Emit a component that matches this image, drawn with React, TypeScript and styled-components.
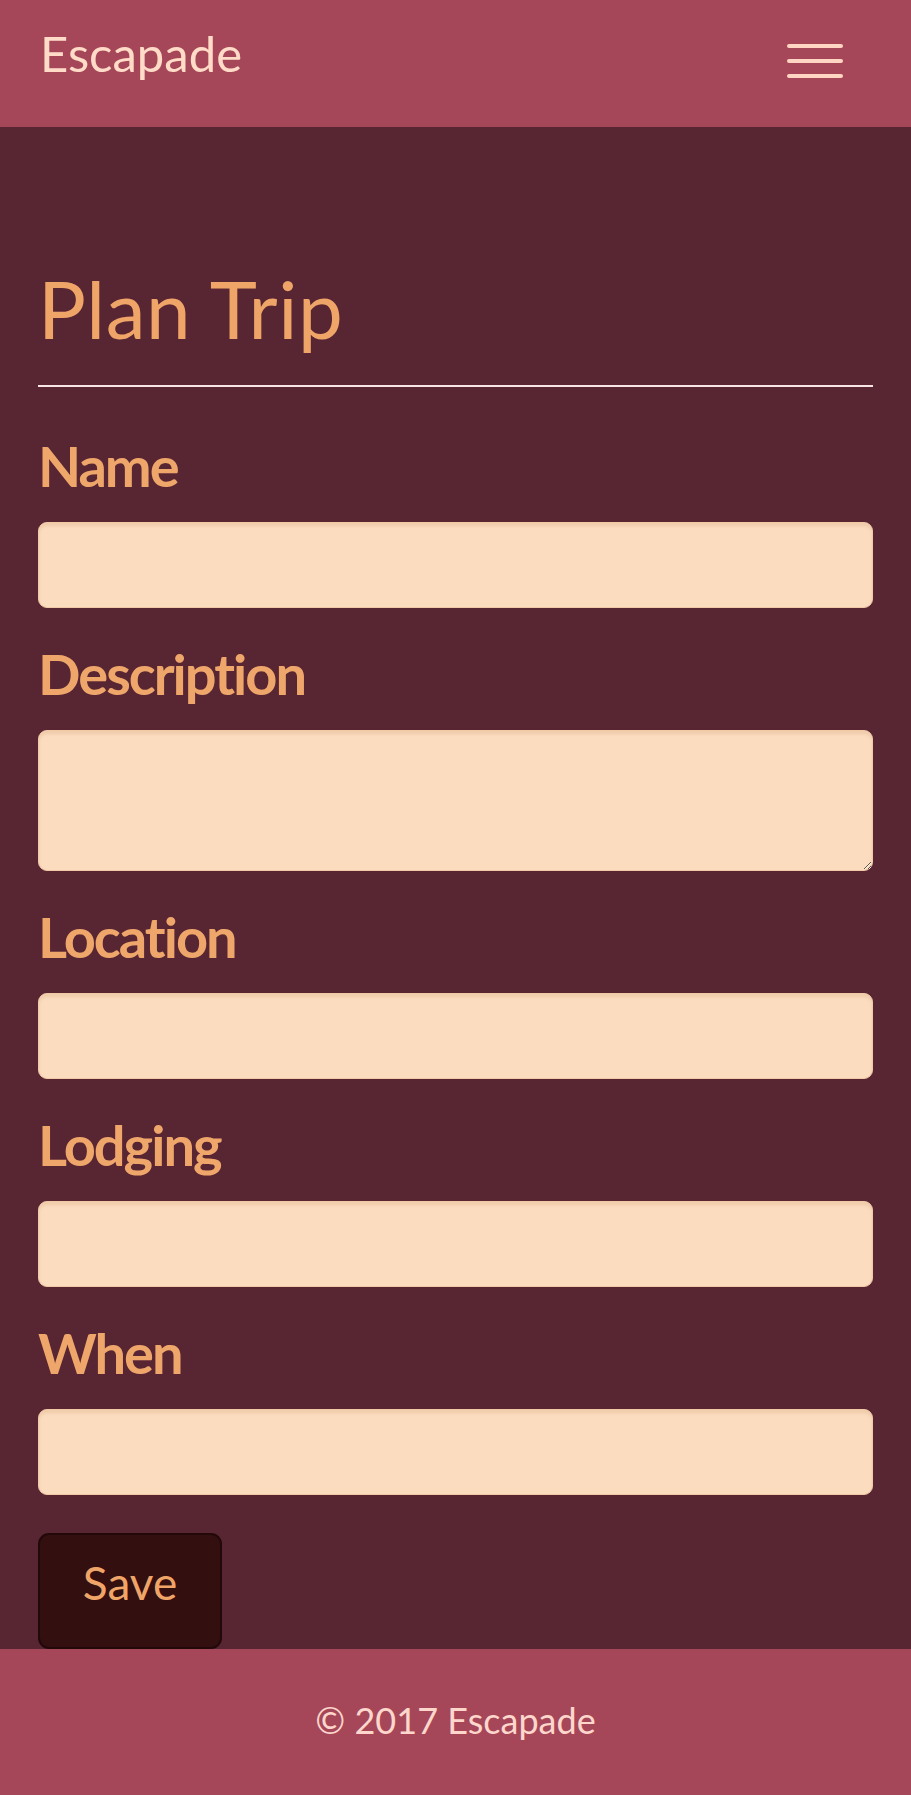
import styled, { createGlobalStyle } from 'styled-components';

const GlobalStyle = createGlobalStyle`
  * { box-sizing: border-box; }
  html, body {
    margin: 0;
    padding: 0;
    background: #582532;
    font-family: Lato, "Open Sans", sans-serif;
  }
`;

const Page = styled.div`
  width: 100%;
  min-height: 100vh;
  display: flex;
  flex-direction: column;
  background: #582532;
`;

const Navbar = styled.header`
  height: 127px;
  background: #a54759;
  display: flex;
  justify-content: space-between;
  align-items: flex-start;
  padding: 24px 68px 0 40px;
`;

const Brand = styled.a`
  font-size: 49px;
  line-height: 1.2;
  color: #ffdbc8;
  text-decoration: none;
`;

const Toggler = styled.button`
  margin-top: 20px;
  padding: 0;
  border: none;
  background: transparent;
  display: flex;
  flex-direction: column;
  gap: 11px;
  cursor: pointer;
`;

const Bar = styled.span`
  display: block;
  width: 56px;
  height: 4px;
  border-radius: 2px;
  background: #ffd6c4;
`;

const Main = styled.main`
  flex: 1;
  padding: 133px 38px 0;
`;

const Title = styled.h1`
  margin: 0;
  font-size: 80px;
  font-weight: 400;
  line-height: 1.2;
  letter-spacing: 0.5px;
  color: #f0a568;
`;

const Divider = styled.hr`
  margin: 29px 0 49px;
  border: none;
  height: 2px;
  background: #f8e4e2;
`;

const Form = styled.form`
  display: flex;
  flex-direction: column;
  gap: 36px;
`;

const Field = styled.div`
  display: flex;
  flex-direction: column;
`;

const Label = styled.label`
  font-size: 56px;
  font-weight: 700;
  line-height: 56px;
  letter-spacing: -2px;
  color: #efa66a;
  padding-top: 2px;
  margin-bottom: 28px;
`;

const inputLook = `
  width: 100%;
  border: 1px solid #f1c9a6;
  border-radius: 9px;
  background: #fbdcbe;
  box-shadow: inset 0 3px 3px rgba(160, 90, 40, 0.12);
  font-family: Lato, sans-serif;
  font-size: 30px;
  color: #582532;
  padding: 10px 16px;
  outline: none;
`;

const Input = styled.input`
  ${inputLook}
  height: 86px;
`;

const TextArea = styled.textarea`
  ${inputLook}
  height: 141px;
  display: block;
`;

const SaveButton = styled.button`
  align-self: flex-start;
  margin-top: 2px;
  width: 184px;
  height: 116px;
  padding: 20px 0 0;
  border: 2px solid #220809;
  border-radius: 11px;
  background: #330f10;
  color: #f0a568;
  font-family: Lato, sans-serif;
  font-size: 46px;
  line-height: 1.2;
  display: flex;
  justify-content: center;
  align-items: flex-start;
  cursor: pointer;
`;

const Footer = styled.footer`
  height: 147px;
  background: #a54759;
  padding-top: 50px;
  text-align: center;
  color: #fdd6cc;
  font-size: 36px;
  line-height: 1.2;
`;

const fields = ['Name', 'Description', 'Location', 'Lodging', 'When'];

export default function App() {
  return (
    <Page>
      <GlobalStyle />
      <Navbar>
        <Brand href="#">Escapade</Brand>
        <Toggler aria-label="Toggle navigation">
          <Bar />
          <Bar />
          <Bar />
        </Toggler>
      </Navbar>
      <Main>
        <Title>Plan Trip</Title>
        <Divider />
        <Form onSubmit={e => e.preventDefault()}>
          {fields.map(f => (
            <Field key={f}>
              <Label htmlFor={f.toLowerCase()}>{f}</Label>
              {f === 'Description'
                ? <TextArea id={f.toLowerCase()} />
                : <Input id={f.toLowerCase()} type="text" />}
            </Field>
          ))}
          <SaveButton type="submit">Save</SaveButton>
        </Form>
      </Main>
      <Footer>© 2017 Escapade</Footer>
    </Page>
  );
}
